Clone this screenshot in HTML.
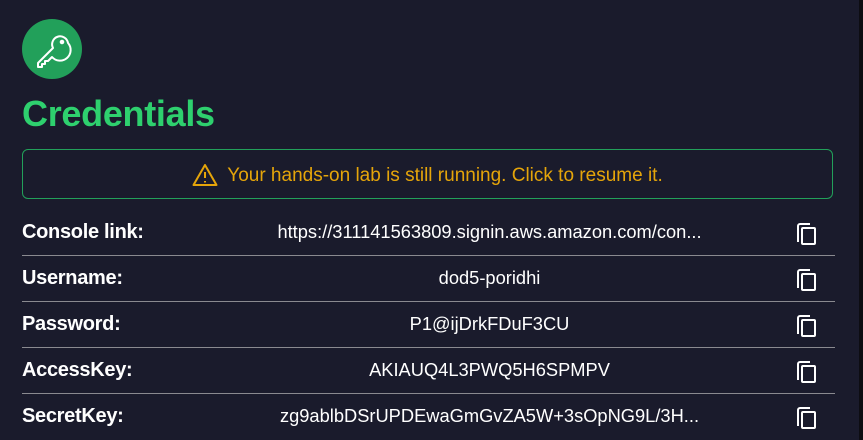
<!DOCTYPE html>
<html><head><meta charset="utf-8"><style>
html,body{margin:0;padding:0}
body{width:863px;height:440px;background:#1a1b2c;overflow:hidden;position:relative;font-family:"Liberation Sans",sans-serif}
.sb{position:absolute;right:0;top:0;width:4px;height:440px;background:#0d0d12}
.icon{position:absolute;left:22px;top:19px;width:60px;height:60px;border-radius:50%;background:#22a05a}
h1{position:absolute;left:22px;top:93px;margin:0;font-size:36px;font-weight:bold;color:#2ed06e;letter-spacing:-0.3px}
.alert{position:absolute;left:22px;top:149px;width:811px;height:50px;border:1px solid #22a05a;border-radius:6px;box-sizing:border-box;display:flex;align-items:center;justify-content:center;color:#e5a50a;font-size:19px;padding-top:4px}
.alert svg{margin-right:9px;margin-top:-3px}
.row{position:absolute;left:22px;width:813px;height:46px}
.row .l{position:absolute;left:0;top:11px;font-size:20px;font-weight:bold;color:#fff;letter-spacing:-0.3px}
.row .v{position:absolute;left:200px;width:535px;top:11px;text-align:center;font-size:18.3px;color:#fff}
.row .c{position:absolute;left:774px;top:12px}
.row .d{position:absolute;left:0;bottom:0;width:813px;height:1px;background:#8a8a90}
</style></head><body>
<div class="icon"><svg width="60" height="60" viewBox="0 0 60 60" fill="none" stroke="#fff" stroke-width="2" stroke-linejoin="round"><path d="M46 24a8 8 0 1 0-15 5L16 44v4h4v-3h3v-3h3l4-4a8 8 0 0 0 16-14z"/><circle cx="40" cy="23" r="1.3" fill="#fff"/></svg></div>
<h1>Credentials</h1>
<div class="alert"><svg width="26" height="24" viewBox="0 0 26 24" fill="none" stroke="#e5a50a" stroke-width="2" stroke-linejoin="round"><path d="M13 2L1.5 22h23z"/><path d="M13 9v6M13 18v1.5"/></svg>Your hands-on lab is still running. Click to resume it.</div>
<div class="row" style="top:210px"><div class="l">Console link:</div><div class="v">https://311141563809.signin.aws.amazon.com/con...</div><div class="c"><svg width="22" height="24" viewBox="0 0 22 24" fill="none" stroke="#fff" stroke-width="2"><path d="M2 20V4a2 2 0 0 1 2-2h10"/><rect x="6" y="6" width="13" height="16" rx="1"/></svg></div><div class="d"></div></div>
<div class="row" style="top:256px"><div class="l">Username:</div><div class="v">dod5-poridhi</div><div class="c"><svg width="22" height="24" viewBox="0 0 22 24" fill="none" stroke="#fff" stroke-width="2"><path d="M2 20V4a2 2 0 0 1 2-2h10"/><rect x="6" y="6" width="13" height="16" rx="1"/></svg></div><div class="d"></div></div>
<div class="row" style="top:302px"><div class="l">Password:</div><div class="v">P1@ijDrkFDuF3CU</div><div class="c"><svg width="22" height="24" viewBox="0 0 22 24" fill="none" stroke="#fff" stroke-width="2"><path d="M2 20V4a2 2 0 0 1 2-2h10"/><rect x="6" y="6" width="13" height="16" rx="1"/></svg></div><div class="d"></div></div>
<div class="row" style="top:348px"><div class="l">AccessKey:</div><div class="v">AKIAUQ4L3PWQ5H6SPMPV</div><div class="c"><svg width="22" height="24" viewBox="0 0 22 24" fill="none" stroke="#fff" stroke-width="2"><path d="M2 20V4a2 2 0 0 1 2-2h10"/><rect x="6" y="6" width="13" height="16" rx="1"/></svg></div><div class="d"></div></div>
<div class="row" style="top:394px"><div class="l">SecretKey:</div><div class="v">zg9ablbDSrUPDEwaGmGvZA5W+3sOpNG9L/3H...</div><div class="c"><svg width="22" height="24" viewBox="0 0 22 24" fill="none" stroke="#fff" stroke-width="2"><path d="M2 20V4a2 2 0 0 1 2-2h10"/><rect x="6" y="6" width="13" height="16" rx="1"/></svg></div></div>
<div class="sb"></div>
</body></html>
